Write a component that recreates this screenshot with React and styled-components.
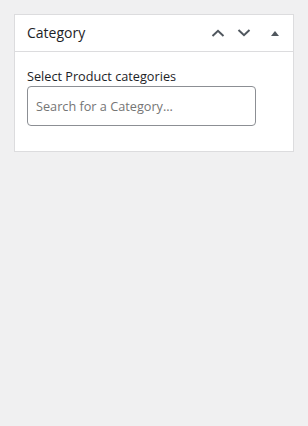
import React from "react";
import styled, { createGlobalStyle } from "styled-components";

const Global = createGlobalStyle`
  html, body {
    margin: 0;
    background: #f0f0f1;
    font-family: "Open Sans", "Noto Sans", sans-serif;
    color: #1d2327;
  }
`;

const Page = styled.div`
  padding: 14px 14px 0 14px;
  width: 280px;
`;

const Panel = styled.section`
  background: #fff;
  border: 1px solid #dcdcde;
`;

const Header = styled.div`
  display: flex;
  align-items: center;
  height: 36px;
  padding: 0 0 0 12px;
  border-bottom: 1px solid #dcdcde;
`;

const Title = styled.h2`
  flex: 1;
  margin: 0;
  font-size: 14px;
  font-weight: 500;
  line-height: 1;
`;

const Actions = styled.div`
  display: flex;
  align-items: center;
`;

const IconBtn = styled.button`
  display: flex;
  align-items: center;
  justify-content: center;
  width: ${(p) => p.$w || 26}px;
  height: 36px;
  padding: 0;
  border: 0;
  background: none;
  color: #50575e;
`;

const Body = styled.div`
  padding: 15px 12px 25px 12px;
`;

const Label = styled.label`
  display: block;
  font-size: 12.7px;
  line-height: 18px;
  margin-bottom: 1px;
`;

const Search = styled.input`
  box-sizing: border-box;
  width: 229px;
  height: 40px;
  padding: 0 8px;
  border: 1px solid #8c8f94;
  border-radius: 4px;
  font-family: inherit;
  font-size: 12.7px;
  color: #2c3338;
  &::placeholder {
    color: #757575;
  }
`;

const Chevron = ({ up }) => (
  <svg width="14" height="8" viewBox="0 0 14 8">
    <path
      d={up ? "M1.5 7 L7 1.8 L12.5 7" : "M1.5 1 L7 6.2 L12.5 1"}
      fill="none"
      stroke="currentColor"
      strokeWidth="2"
    />
  </svg>
);

export default function App() {
  return (
    <Page>
      <Global />
      <Panel>
        <Header>
          <Title>Category</Title>
          <Actions>
            <IconBtn $w={26}>
              <Chevron up />
            </IconBtn>
            <IconBtn $w={26}>
              <Chevron />
            </IconBtn>
            <IconBtn $w={36}>
              <svg width="8" height="5" viewBox="0 0 8 5">
                <path d="M0 5 L4 0 L8 5 Z" fill="currentColor" />
              </svg>
            </IconBtn>
          </Actions>
        </Header>
        <Body>
          <Label htmlFor="cat">Select Product categories</Label>
          <Search id="cat" placeholder="Search for a Category..." />
        </Body>
      </Panel>
    </Page>
  );
}
